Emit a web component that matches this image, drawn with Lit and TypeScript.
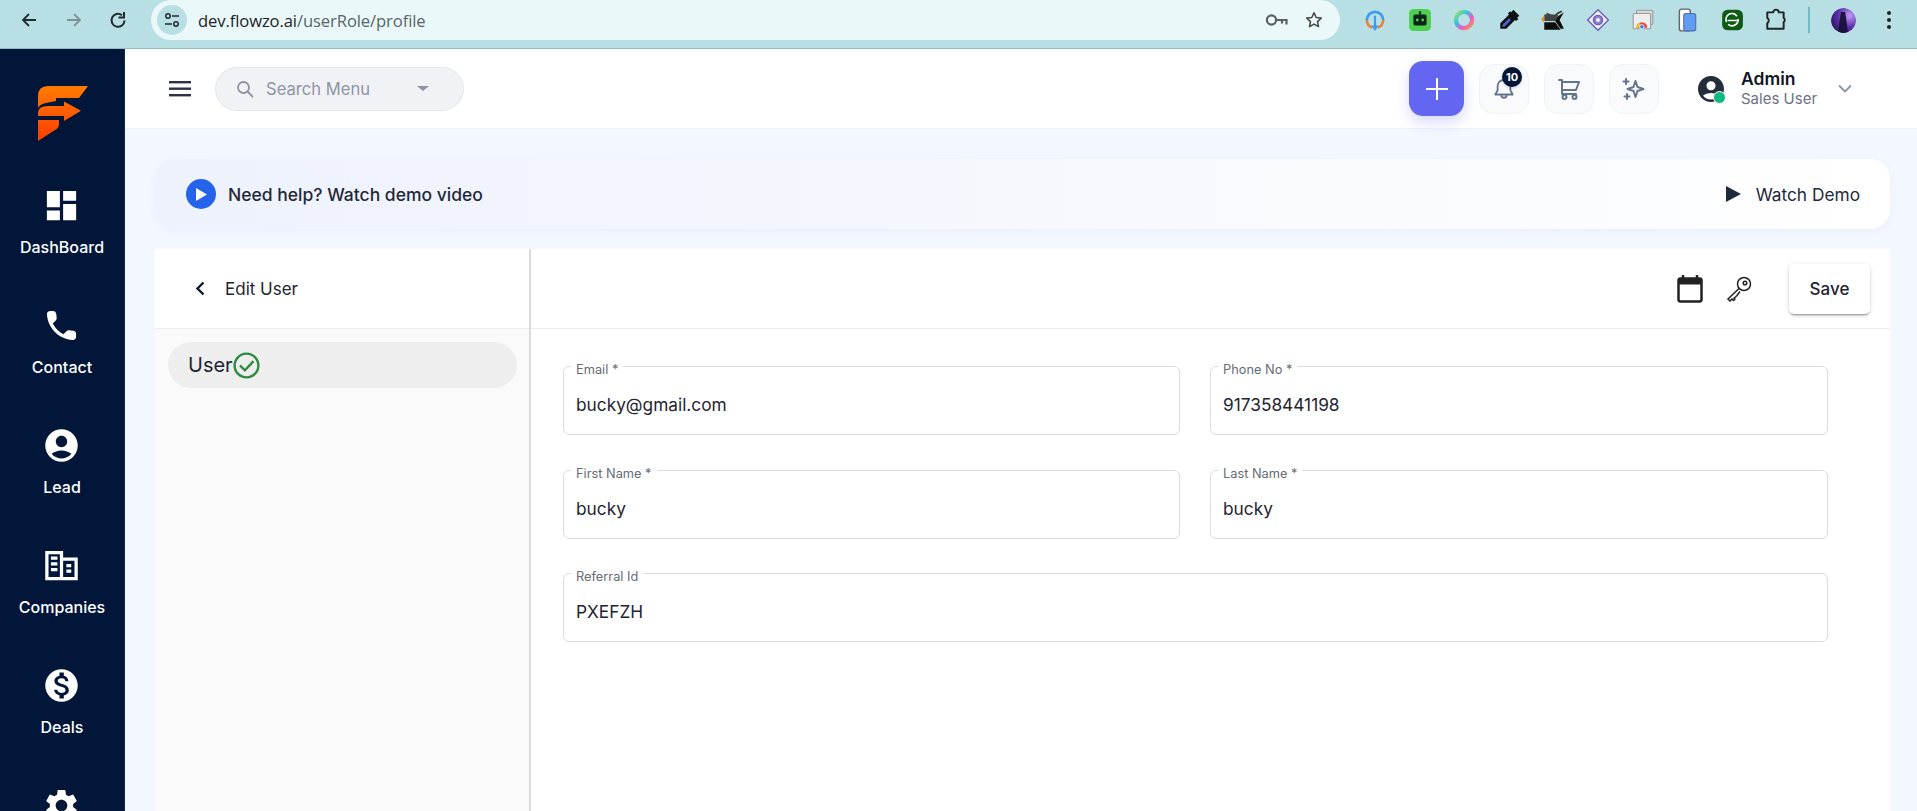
import { LitElement, html, css, svg } from "lit";
import { customElement } from "lit/decorators.js";

const navItems = [
  { label: "DashBoard", icon: svg`<path d="M3 13h8V3H3v10zm0 8h8v-6H3v6zm10 0h8V11h-8v10zm0-18v6h8V3h-8z"/>` },
  { label: "Contact", icon: svg`<path d="M19.23 15.26l-2.54-.29c-.61-.07-1.21.14-1.64.57l-1.84 1.84c-2.83-1.44-5.15-3.75-6.59-6.59l1.85-1.85c.43-.43.64-1.03.57-1.64l-.29-2.52c-.12-1.01-.97-1.77-1.99-1.77H5.03c-1.13 0-2.07.94-2 2.07.53 8.54 7.36 15.36 15.89 15.89 1.13.07 2.07-.87 2.07-2v-1.73c.01-1.01-.75-1.86-1.76-1.98z"/>` },
  { label: "Lead", icon: svg`<path d="M12 2C6.48 2 2 6.48 2 12s4.48 10 10 10 10-4.48 10-10S17.52 2 12 2zm0 4c1.93 0 3.5 1.57 3.5 3.5S13.93 13 12 13s-3.5-1.57-3.5-3.5S10.07 6 12 6zm0 14c-2.03 0-4.43-.82-6.14-2.88C7.55 15.8 9.68 15 12 15s4.45.8 6.14 2.12C16.43 19.18 14.03 20 12 20z"/>` },
  { label: "Companies", icon: svg`<path fill-rule="evenodd" d="M2 3h11v4h9v14H2V3zm2 2v14h7V5H4zm1.500 1.500h4v2h-4v-2zm0 3.500h4v2h-4v-2zm0 3.500h4v2h-4v-2zM13 9v10h7V9h-7zm2 2h3v2h-3v-2zm0 3.500h3v2h-3v-2z"/>` },
  { label: "Deals", icon: svg`<path d="M12 2C6.48 2 2 6.48 2 12s4.48 10 10 10 10-4.48 10-10S17.52 2 12 2zm1.41 16.09V20h-2.67v-1.93c-1.71-.36-3.16-1.46-3.27-3.4h1.96c.1 1.05.82 1.87 2.65 1.87 1.96 0 2.4-.98 2.4-1.59 0-.83-.44-1.61-2.67-2.14-2.48-.6-4.18-1.62-4.18-3.67 0-1.72 1.39-2.84 3.11-3.21V4h2.67v1.95c1.86.45 2.79 1.86 2.85 3.39H14.3c-.05-1.11-.64-1.87-2.22-1.87-1.5 0-2.4.68-2.4 1.64 0 .84.65 1.39 2.67 1.91s4.18 1.39 4.18 3.91c-.01 1.83-1.38 2.83-3.12 3.16z"/>` },
  { label: "", icon: svg`<path d="M19.14 12.94c.04-.3.06-.61.06-.94 0-.32-.02-.64-.07-.94l2.03-1.58c.18-.14.23-.41.12-.61l-1.92-3.32c-.12-.22-.37-.29-.59-.22l-2.39.96c-.5-.38-1.03-.7-1.62-.94l-.36-2.54c-.04-.24-.24-.41-.48-.41h-3.84c-.24 0-.43.17-.47.41l-.36 2.54c-.59.24-1.13.57-1.62.94l-2.39-.96c-.22-.08-.47 0-.59.22L2.74 8.87c-.12.21-.08.47.12.61l2.03 1.58c-.05.3-.09.63-.09.94s.02.64.07.94l-2.03 1.58c-.18.14-.23.41-.12.61l1.92 3.32c.12.22.37.29.59.22l2.39-.96c.5.38 1.03.7 1.62.94l.36 2.54c.05.24.24.41.48.41h3.84c.24 0 .44-.17.47-.41l.36-2.54c.59-.24 1.13-.56 1.62-.94l2.39.96c.22.08.47 0 .59-.22l1.92-3.32c.12-.22.07-.47-.12-.61l-2.01-1.58zM12 15.6c-1.98 0-3.6-1.62-3.6-3.6s1.62-3.6 3.6-3.6 3.6 1.62 3.6 3.6-1.62 3.6-3.6 3.6z"/>` },
];

const extensions = [
  svg`<path d="M3.500 11a7.500 7.500 0 0 1 15 0" fill="none" stroke="#3b9cf0" stroke-width="2.400"/><path d="M3.500 11a7.500 7.500 0 0 0 5 7M18.500 11a7.500 7.500 0 0 1-5 7" fill="none" stroke="#f0813a" stroke-width="2.400"/><path d="M11 7v11" stroke="#3b9cf0" stroke-width="2"/><path d="M7.500 16h7L11 21z" fill="#3b9cf0"/>`,
  svg`<rect x="1" y="1" width="20" height="20" rx="4" fill="#4cd04f"/><path d="M11 3v3" stroke="#12301a" stroke-width="2"/><rect x="5" y="6" width="12" height="10" rx="1.500" fill="#10231a"/><circle cx="8.500" cy="11" r="1.300" fill="#4cd04f"/><circle cx="13.500" cy="11" r="1.300" fill="#4cd04f"/>`,
  svg`<circle cx="11" cy="11" r="7.500" fill="none" stroke="url(#ring)" stroke-width="4"/><defs><linearGradient id="ring" x1="0" y1="0" x2="1" y2="1"><stop offset="0" stop-color="#9ee35a"/><stop offset=".35" stop-color="#35c5dd"/><stop offset=".65" stop-color="#e85bd0"/><stop offset="1" stop-color="#ff9a3c"/></linearGradient></defs>`,
  svg`<path d="M15 1.500l5.500 5.500-2 2 1 1-2 2-1-1-8 8H3v-5l8-8-1-1 2-2 1 1z" fill="#111"/><path d="M5 15.500l6-6 1.800 1.800-6 6H5z" fill="#4a63d8"/>`,
  svg`<path d="M5 5l7 3 3-3 4-2" fill="none" stroke="#333" stroke-width="1.400"/><path d="M3 6h13l-3 6H3z" fill="#444"/><path d="M3 13h10l5 7H3z" fill="#0c0c0c"/><path d="M15 8l6-4-4 7 4 8-3 0-5-7z" fill="#0c0c0c"/><path d="M0 10l3-3v7z" fill="#f08a1c"/>`,
  svg`<path d="M11 1.500L20.500 11 11 20.500 1.500 11z" fill="#f3f0fb" stroke="#6f5fb8" stroke-width="1.300"/><circle cx="11" cy="11" r="4.300" fill="#8b7fd0" stroke="#6456b0" stroke-width="1"/><circle cx="11" cy="11" r="1.800" fill="#f3f0fb"/>`,
  svg`<rect x="5" y="2" width="15" height="13" rx="1" fill="#d8d8d8" stroke="#9a9a9a"/><rect x="2" y="5" width="16" height="14" rx="1" fill="#eee" stroke="#9a9a9a"/><path d="M5 18a5 5 0 0 1 10 0z" fill="#e8453c"/><path d="M5 18a5 5 0 0 1 3-4.500l2 4.500z" fill="#f4c20d"/><circle cx="10" cy="17.200" r="2" fill="#3b7de8" stroke="#fff" stroke-width=".7"/>`,
  svg`<rect x="4" y="1" width="10" height="20" rx="2" fill="#fff" stroke="#5b6478" stroke-width="1.300"/><rect x="8" y="5" width="11" height="16" rx="2" fill="#5f9df5" stroke="#4f6ea8" stroke-width="1"/>`,
  svg`<rect x="2" y="1.500" width="19" height="19" rx="5" fill="#0d5a12"/><path d="M6 13a5.500 5.500 0 0 1 9.500-5.500M16.500 10a5.500 5.500 0 0 1-9 5M7 11.500h9" fill="none" stroke="#fff" stroke-width="1.500"/>`,
  svg`<path d="M3 4h5.500a2.500 2.500 0 0 1 5 0H18v5a2.500 2.500 0 0 1 0 4v6H3v-5a3 3 0 0 0 0-5z" fill="none" stroke="#222" stroke-width="1.800" stroke-linejoin="round"/>`,
];

@customElement("app-root")
export class AppRoot extends LitElement {
  static styles = css`
    :host { display: block; width: 1917px; height: 811px; overflow: hidden; font-family: Inter, "Liberation Sans", sans-serif; color: #1f2430; background: #f3f7ff; }
    * { box-sizing: border-box; }
    svg { display: block; flex: none; }

    .chrome { height: 49px; background: #b8e0e4; border-bottom: 1px solid #94bcc0; display: flex; align-items: flex-start; }
    .nav-btns { display: flex; width: 151px; height: 40px; align-items: center; padding-left: 20px; gap: 26.500px; }
    .omni { width: 1189px; height: 40px; background: #ebf8f9; border-radius: 20px; display: flex; align-items: center; padding-left: 6px; }
    .tune { width: 30px; height: 30px; border-radius: 50%; background: #b8e0e4; display: flex; align-items: center; justify-content: center; }
    .url { margin-left: 11px; font-family: "Open Sans", sans-serif; font-size: 16.600px; color: #56666a; flex: 1; letter-spacing: -.1px; }
    .url b { font-weight: 400; color: #1b2326; }
    .omni-ic { display: flex; gap: 17px; padding-right: 17px; align-items: center; }
    .exts { display: flex; height: 40px; align-items: center; padding-left: 23px; }
    .ext { width: 44.600px; display: flex; justify-content: flex-start; }
    .sep { width: 2px; height: 26px; background: #6fbcc4; margin-left: -1px; }
    .me { margin-left: 21px; border-radius: 50%; }
    .dots { display: flex; flex-direction: column; gap: 3px; margin-left: 31px; }
    .dots i { width: 4px; height: 4px; border-radius: 50%; background: #222; }

    .body { display: flex; height: 762px; }
    .side { width: 125px; background: #011638; display: flex; flex-direction: column; align-items: center; padding-top: 37px; flex: none; overflow: hidden; border-right: 1px solid #12284a; }
    .logo { margin-bottom: 45px; margin-left: 1px; }
    .nav { display: flex; flex-direction: column; align-items: center; gap: 49px; }
    .nav-item { display: flex; flex-direction: column; align-items: center; gap: 12px; color: #fff; font-size: 16px; font-weight: 500; line-height: 20px; height: 71px; }

    .content { flex: 1; min-width: 0; display: flex; flex-direction: column; }
    .top { height: 80px; background: #fff; border-bottom: 1px solid #f0f1f4; display: flex; align-items: center; padding-left: 44px; flex: none; }
    .search { margin-left: 24px; width: 249px; height: 44px; border-radius: 22px; background: #f1f2f6; border: 1px solid #e4e6ec; display: flex; align-items: center; padding-left: 20px; color: #8e94a5; font-size: 16.600px; }
    .search span { margin-left: 12px; flex: 1; }
    .caret { width: 0; height: 0; border: 6px solid transparent; border-top: 5px solid #8e94a5; border-bottom: 0; margin-right: 34px; }
    .spacer { flex: 1; }
    .plus { width: 55px; height: 55px; border-radius: 14px; background: #6366f1; display: flex; align-items: center; justify-content: center; box-shadow: 0 6px 14px rgba(99,102,241,.25); margin-right: 15px; }
    .tool { position: relative; width: 50px; height: 50px; border-radius: 14px; background: #f8fafc; border: 1px solid #f0f2f6; display: flex; align-items: center; justify-content: center; margin-right: 15px; }
    .badge { position: absolute; top: 2px; right: 6px; width: 20px; height: 20px; border-radius: 50%; background: #011638; color: #fff; font-size: 11px; font-weight: 700; display: flex; align-items: center; justify-content: center; box-shadow: 0 1px 3px rgba(0,0,0,.2); }
    .user { display: flex; align-items: center; margin-left: 24px; margin-right: 65px; }
    .avatar { position: relative; width: 26px; height: 26px; }
    .dot { position: absolute; right: -2px; bottom: -2px; width: 13px; height: 13px; border-radius: 50%; background: #10b981; border: 1px solid #fff; }
    .who { margin-left: 17px; width: 97px; }
    .who b { display: block; font-size: 17.500px; font-weight: 600; color: #0f1626; line-height: 21px; }
    .who span { display: block; font-size: 15px; color: #6b7280; line-height: 20px; }

    main { flex: 1; min-height: 0; padding: 30px 27px 0 30px; display: flex; flex-direction: column; gap: 20px; }
    .banner { height: 70px; flex: none; border-radius: 20px; background: linear-gradient(90deg, #eef2fd 0%, #f6f8fe 50%, #fff 100%); box-shadow: 0 2px 8px rgba(120,140,190,.08); display: flex; align-items: center; padding: 0 30px 0 31px; }
    .play { width: 30px; height: 30px; border-radius: 50%; background: #2563eb; display: flex; align-items: center; justify-content: center; }
    .need { margin-left: 12px; font-size: 17.500px; font-weight: 450; color: #1f2937; flex: 1; }
    .watch { display: flex; align-items: center; gap: 15px; font-size: 17.300px; color: #1e293b; }

    .panel { flex: 1; min-height: 0; display: flex; background: #fff; }
    .left { width: 376px; flex: none; border-right: 2px solid #dcdcdc; display: flex; flex-direction: column; background: #fafafa; }
    .left-h { height: 80px; flex: none; background: #fff; border-bottom: 1px solid #ececec; display: flex; align-items: center; padding-left: 40px; font-size: 17px; color: #1f2430; gap: 20px; }
    .item { margin: 13px 12px 0 13px; height: 46px; border-radius: 23px; background: #eeeeee; display: flex; align-items: center; padding-left: 20px; font-size: 20px; color: #1f2430; }
    .right { flex: 1; min-width: 0; display: flex; flex-direction: column; }
    .bar { height: 80px; flex: none; border-bottom: 1px solid #ececec; display: flex; align-items: center; justify-content: flex-end; padding-right: 20px; }
    .cal { margin-right: 23px; }
    .save { width: 81px; height: 50px; border: 0; border-radius: 5px; background: #fff; font: 500 17px Inter, sans-serif; color: #1f2430; box-shadow: 0 3px 1px -2px rgba(0,0,0,.2), 0 2px 2px 0 rgba(0,0,0,.14), 0 1px 5px 0 rgba(0,0,0,.12); margin-left: 37px; }
    .form { display: grid; grid-template-columns: 617px 618px; column-gap: 30px; row-gap: 27.500px; padding: 30px 0 0 32px; }
    .wide { grid-column: 1 / 3; }
    fieldset { margin: 0; height: 76px; border: 1px solid #dcdde0; border-radius: 6px; padding: 0 12px; min-width: 0; display: block; }
    legend { font-size: 12.800px; color: #666b75; padding: 0 5px; margin-left: -5px; line-height: 15px; }
    legend span { display: block; transform: translateY(3px); }
    .val { font-size: 17.300px; color: #1f2430; line-height: 24px; margin-top: 19px; }
  `;

  private field(label: string, value: string, wide = false) {
    return html`<fieldset class=${wide ? "wide" : ""}><legend><span>${label}</span></legend><div class="val">${value}</div></fieldset>`;
  }

  render() {
    return html`
      <div class="chrome">
        <div class="nav-btns">
          <svg width="18" height="18" viewBox="0 0 18 18" fill="none" stroke="#1f2a2e" stroke-width="1.800"><path d="M16 9H3M9 3L3 9l6 6"/></svg>
          <svg width="18" height="18" viewBox="0 0 18 18" fill="none" stroke="#7d9296" stroke-width="1.800"><path d="M2 9h13M9 3l6 6-6 6"/></svg>
          <svg width="18" height="18" viewBox="0 0 18 18" fill="none" stroke="#1f2a2e" stroke-width="2"><path d="M15.500 9.500A6.500 6.500 0 1 1 13 4.200"/><path d="M15 1v5.500H9.500" /></svg>
        </div>
        <div class="omni">
          <div class="tune">
            <svg width="18" height="18" viewBox="0 0 18 18" fill="none" stroke="#1f2a2e" stroke-width="1.500"><circle cx="5" cy="5" r="2.200"/><path d="M9 5h7M2 13h7"/><circle cx="13" cy="13" r="2.200"/></svg>
          </div>
          <div class="url"><b>dev.flowzo.ai</b>/userRole/profile</div>
          <div class="omni-ic">
            <svg width="23" height="18" viewBox="0 0 23 18" fill="none" stroke="#5a5f61" stroke-width="2.200"><circle cx="6.500" cy="9" r="4.600"/><path d="M11 9h10.500v4.500M17 9v3.500"/></svg>
            <svg width="18" height="18" viewBox="0 0 18 18" fill="none" stroke="#444" stroke-width="1.500" stroke-linejoin="round"><path d="M9 1.800l2.200 4.700 5 .6-3.700 3.500 1 5L9 13.100l-4.500 2.500 1-5L1.800 7.100l5-.6z"/></svg>
          </div>
        </div>
        <div class="exts">
          ${extensions.map((e) => html`<div class="ext"><svg width="24" height="24" viewBox="0 0 22 22">${e}</svg></div>`)}
          <div class="sep"></div>
          <svg class="me" width="25" height="25" viewBox="0 0 25 25">
            <defs><radialGradient id="sky" cx=".75" cy=".3" r=".9"><stop offset="0" stop-color="#c39cf5"/><stop offset=".5" stop-color="#5f32ad"/><stop offset="1" stop-color="#22124f"/></radialGradient><clipPath id="mc"><circle cx="12.500" cy="12.500" r="12.500"/></clipPath></defs>
            <g clip-path="url(#mc)"><rect width="25" height="25" fill="url(#sky)"/><path d="M10 4h4l1 6 2 15H7l2-15z" fill="#1c1342"/></g>
          </svg>
          <div class="dots"><i></i><i></i><i></i></div>
        </div>
      </div>
      <div class="body">
        <aside class="side">
          <svg class="logo" width="50" height="55" viewBox="0 0 50 55">
            <defs><linearGradient id="fg" x1="0" y1="0" x2="0" y2="1"><stop offset="0" stop-color="#ff7a00"/><stop offset="1" stop-color="#ff3d00"/></linearGradient></defs>
            <path fill="url(#fg)" d="M0 22V10Q0 0 10 0H50L41 12H18V15L8 17Q2 18 0 22zM0 30V27Q0 20 10 20H26V15.500L43 24.700 26 35V30zM0 34H21V38Q21 42 17 44L0 55z"/>
          </svg>
          <nav class="nav">
            ${navItems.map((n) => html`<div class="nav-item"><svg width="39" height="39" viewBox="0 0 24 24" fill="#fff">${n.icon}</svg>${n.label ? html`<span>${n.label}</span>` : ""}</div>`)}
          </nav>
        </aside>
        <div class="content">
          <header class="top">
            <svg width="22" height="16" viewBox="0 0 22 16" fill="#2a3342"><rect width="22" height="2.400"/><rect y="6.500" width="22" height="2.400"/><rect y="13" width="22" height="2.400"/></svg>
            <div class="search">
              <svg width="18" height="18" viewBox="0 0 18 18" fill="none" stroke="#8e94a5" stroke-width="1.800"><circle cx="7.500" cy="7.500" r="5.500"/><path d="M11.500 11.500L17 17"/></svg>
              <span>Search Menu</span>
              <div class="caret"></div>
            </div>
            <div class="spacer"></div>
            <div class="plus"><svg width="24" height="24" viewBox="0 0 24 24" stroke="#fff" stroke-width="2"><path d="M12 1v22M1 12h22"/></svg></div>
            <div class="tool">
              <svg width="22" height="24" viewBox="0 0 24 26" fill="none" stroke="#64748b" stroke-width="2" stroke-linejoin="round" stroke-linecap="round"><path d="M12 3a7 7 0 0 0-7 7v4.500L2.500 19h19L19 14.500V10a7 7 0 0 0-7-7z"/><path d="M9 19.500a3 3 0 0 0 6 0"/></svg>
              <span class="badge">10</span>
            </div>
            <div class="tool">
              <svg width="24" height="24" viewBox="0 0 24 24" fill="none" stroke="#64748b" stroke-width="2" stroke-linejoin="round" stroke-linecap="round"><path d="M2 3h3v14h14M5 5h17l-3 8H5"/><circle cx="7.500" cy="20" r="2"/><circle cx="17.500" cy="20" r="2"/></svg>
            </div>
            <div class="tool">
              <svg width="24" height="24" viewBox="0 0 24 24" fill="none" stroke="#64748b" stroke-width="2" stroke-linejoin="round" stroke-linecap="round"><path d="M13.500 4l2 6 6 2-6 2-2 6-2-6-6-2 6-2z"/><path d="M4 2v5M1.500 4.500h5M5 17v5M2.500 19.500h5"/></svg>
            </div>
            <div class="user">
              <div class="avatar">
                <svg width="26" height="26" viewBox="2 2 20 20" fill="#232d3b"><path d="M12 2C6.480 2 2 6.480 2 12s4.480 10 10 10 10-4.480 10-10S17.520 2 12 2zm0 4c1.930 0 3.500 1.570 3.500 3.500S13.930 13 12 13s-3.500-1.570-3.500-3.500S10.070 6 12 6zm0 14c-2.030 0-4.430-.820-6.140-2.880C7.550 15.800 9.680 15 12 15s4.450.800 6.140 2.120C16.430 19.180 14.030 20 12 20z"/></svg>
                <span class="dot"></span>
              </div>
              <div class="who"><b>Admin</b><span>Sales User</span></div>
              <svg width="14" height="9" viewBox="0 0 14 9" fill="none" stroke="#8b93a3" stroke-width="1.800"><path d="M1 1.500l6 6 6-6"/></svg>
            </div>
          </header>
          <main>
            <section class="banner">
              <div class="play"><svg width="12" height="13" viewBox="0 0 12 13" fill="#fff"><path d="M1 0l11 6.500L1 13z"/></svg></div>
              <div class="need">Need help? Watch demo video</div>
              <div class="watch"><svg width="15" height="16" viewBox="0 0 15 16" fill="#1e293b"><path d="M0 0l15 8-15 8z"/></svg>Watch Demo</div>
            </section>
            <section class="panel">
              <div class="left">
                <div class="left-h">
                  <svg width="10" height="15" viewBox="0 0 10 15" fill="none" stroke="#0a1a33" stroke-width="2.400"><path d="M8.500 1.500L2.500 7.500l6 6"/></svg>
                  <span>Edit User</span>
                </div>
                <div class="item">User<svg width="27" height="27" viewBox="0 0 25 25" fill="none" stroke="#2e8b3e" stroke-width="2.200"><circle cx="12.500" cy="12.500" r="11"/><path d="M6.500 12.500l4.500 4.500 8-8.500"/></svg></div>
              </div>
              <div class="right">
                <div class="bar">
                  <svg class="cal" width="26" height="28" viewBox="0 0 26 28" fill="none"><path d="M6 0v4M20 0v4" stroke="#222" stroke-width="2.500"/><rect x="1.500" y="3.500" width="23" height="23" rx="2" stroke="#222" stroke-width="2.500"/><rect x="1.500" y="3.500" width="23" height="6" fill="#222"/></svg>
                  <svg width="26" height="26" viewBox="0 0 26 26" fill="none" stroke="#222" stroke-width="1.500"><circle cx="18" cy="8" r="6.500"/><circle cx="19" cy="7" r="1.800"/><path d="M13 12.500L2 23l2 2 2-2 1.500 1.500L9 23l-1-1 2-1.500 1-1 3-4"/></svg>
                  <button class="save">Save</button>
                </div>
                <div class="form">
                  ${this.field("Email *", "bucky@gmail.com")}
                  ${this.field("Phone No *", "917358441198")}
                  ${this.field("First Name *", "bucky")}
                  ${this.field("Last Name *", "bucky")}
                  ${this.field("Referral Id", "PXEFZH", true)}
                </div>
              </div>
            </section>
          </main>
        </div>
      </div>
    `;
  }
}
